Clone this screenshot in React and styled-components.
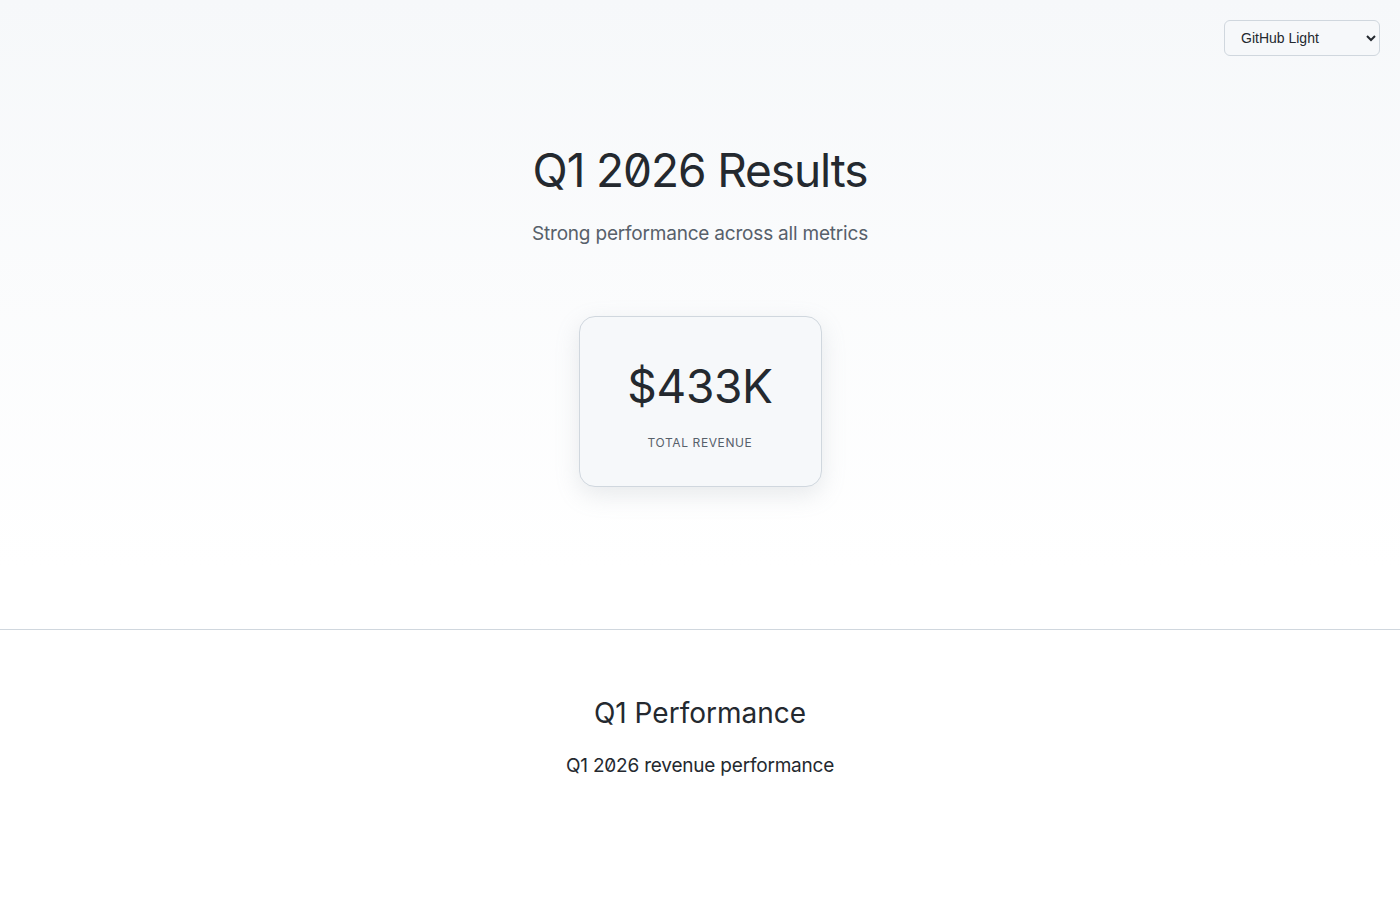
import React, { useState } from "react";
import styled, { createGlobalStyle } from "styled-components";

const GlobalStyle = createGlobalStyle`
  html, body {
    margin: 0;
    padding: 0;
    background: #ffffff;
  }
  body {
    font-family: Inter, "Noto Sans", sans-serif;
    font-feature-settings: "zero" 1;
    color: #24292f;
  }
`;

const Page = styled.div`
  min-height: 900px;
  position: relative;
`;

const ThemeSelect = styled.select`
  position: absolute;
  top: 20px;
  right: 20px;
  width: 156px;
  height: 36px;
  padding: 0 10px 0 12px;
  font-family: "Liberation Sans", Arial, sans-serif;
  font-size: 14px;
  color: #24292f;
  background: #f6f8fa;
  border: 1px solid #d0d7de;
  border-radius: 6px;
`;

const Hero = styled.section`
  height: 630px;
  box-sizing: border-box;
  padding-top: 141px;
  display: flex;
  flex-direction: column;
  align-items: center;
  background: linear-gradient(180deg, #f6f8fa 0%, #ffffff 90%);
  border-bottom: 1px solid #d0d7de;
`;

const Title = styled.h1`
  margin: 0;
  font-size: 46px;
  font-weight: 400;
  line-height: 58px;
  letter-spacing: -1.1px;
  color: #24292f;
`;

const Subtitle = styled.p`
  margin: 22px 0 0;
  font-size: 19px;
  line-height: 26px;
  letter-spacing: -0.2px;
  color: #57606a;
`;

const MetricCard = styled.div`
  margin-top: 69px;
  width: 243px;
  height: 171px;
  box-sizing: border-box;
  display: flex;
  flex-direction: column;
  align-items: center;
  justify-content: center;
  background: #f6f8fa;
  border: 1px solid #d0d7de;
  border-radius: 16px;
  box-shadow: 0 8px 24px rgba(140, 149, 159, 0.2);
`;

const MetricValue = styled.div`
  margin-top: 5px;
  font-size: 46px;
  line-height: 56px;
  letter-spacing: -0.3px;
  color: #24292f;
`;

const MetricLabel = styled.div`
  margin-top: 21px;
  font-size: 12px;
  letter-spacing: 0.6px;
  text-transform: uppercase;
  color: #57606a;
`;

const Section = styled.section`
  padding-top: 64px;
  display: flex;
  flex-direction: column;
  align-items: center;
`;

const SectionTitle = styled.h2`
  margin: 0;
  font-size: 28px;
  font-weight: 400;
  line-height: 38px;
  color: #24292f;
`;

const SectionText = styled.p`
  margin: 21px 0 0;
  font-size: 19px;
  line-height: 26px;
  letter-spacing: -0.2px;
  color: #24292f;
`;

export default function App() {
  const [theme, setTheme] = useState("github-light");

  return (
    <Page>
      <GlobalStyle />
      <ThemeSelect value={theme} onChange={(e) => setTheme(e.target.value)}>
        <option value="github-light">GitHub Light</option>
        <option value="github-dark">GitHub Dark</option>
      </ThemeSelect>
      <Hero>
        <Title>Q1 2026 Results</Title>
        <Subtitle>Strong performance across all metrics</Subtitle>
        <MetricCard>
          <MetricValue>$433K</MetricValue>
          <MetricLabel>Total Revenue</MetricLabel>
        </MetricCard>
      </Hero>
      <Section>
        <SectionTitle>Q1 Performance</SectionTitle>
        <SectionText>Q1 2026 revenue performance</SectionText>
      </Section>
    </Page>
  );
}
